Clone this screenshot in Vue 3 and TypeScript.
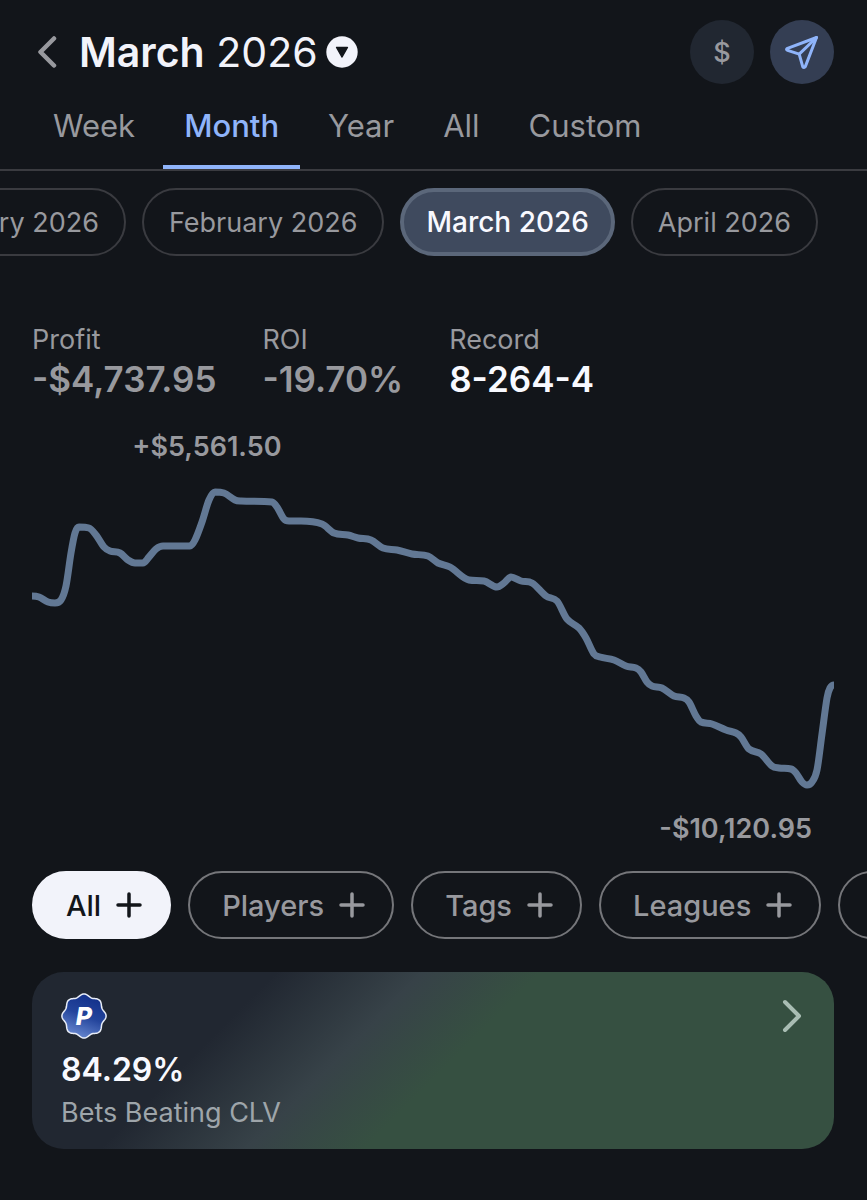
<script setup lang="ts">
import { computed, ref } from 'vue'

type Point = [number, number]

const tabs: string[] = ['Week', 'Month', 'Year', 'All', 'Custom']
const activeTab = ref('Month')

const periods: string[] = ['January 2026', 'February 2026', 'March 2026', 'April 2026']
const activePeriod = ref('March 2026')

const filters: string[] = ['All', 'Players', 'Tags', 'Leagues']
const activeFilter = ref('All')

const stats = [
  { label: 'Profit', value: '-$4,737.95', strong: false },
  { label: 'ROI', value: '-19.70%', strong: false },
  { label: 'Record', value: '8-264-4', strong: true },
]

const points: Point[] = [
  [0, 112], [7, 113], [16, 118], [23, 119], [29, 116], [34, 102], [39, 69], [43, 49], [47, 43],
  [57, 44], [64, 51], [72, 63], [78, 67], [88, 69], [96, 76], [103, 79], [111, 79], [117, 73],
  [124, 65], [131, 62], [158, 62], [163, 56], [170, 38], [177, 16], [183, 8], [192, 9], [203, 16],
  [209, 17], [240, 18], [245, 23], [252, 35], [257, 37], [269, 37], [290, 40], [302, 49], [316, 51],
  [326, 54], [339, 56], [351, 64], [365, 66], [380, 70], [396, 72], [406, 79], [418, 83],
  [437, 96], [452, 97], [465, 103], [472, 99], [479, 93], [489, 97], [500, 99], [514, 112],
  [525, 117], [535, 135], [547, 144], [554, 154], [562, 170], [568, 173], [582, 176],
  [594, 182], [604, 184], [609, 188], [615, 198], [620, 202], [630, 204], [642, 212], [652, 214],
  [657, 218], [664, 232], [669, 238], [680, 240], [694, 246], [704, 249], [709, 253], [717, 265],
  [729, 270], [740, 282], [747, 284], [759, 285], [764, 289], [770, 298], [775, 301], [780, 298],
  [785, 286], [790, 250], [795, 214], [798, 204], [802, 201],
]

// Monotone cubic interpolation keeps the plateaus flat.
const linePath = computed<string>(() => {
  const n = points.length
  const slope: number[] = []
  for (let i = 0; i < n - 1; i++) {
    slope.push((points[i + 1][1] - points[i][1]) / (points[i + 1][0] - points[i][0]))
  }
  const tangent: number[] = points.map((_, i) => {
    if (i === 0 || i === n - 1) return 0
    const a = slope[i - 1]
    const b = slope[i]
    if (a * b <= 0) return 0
    const mean = (points[i + 1][1] - points[i - 1][1]) / (points[i + 1][0] - points[i - 1][0])
    const limit = 3 * Math.min(Math.abs(a), Math.abs(b))
    return Math.sign(mean) * Math.min(Math.abs(mean), limit)
  })
  let d = `M${points[0][0]} ${points[0][1]}`
  for (let i = 0; i < n - 1; i++) {
    const [x0, y0] = points[i]
    const [x1, y1] = points[i + 1]
    const h = (x1 - x0) / 3
    d += `C${x0 + h} ${y0 + tangent[i] * h} ${x1 - h} ${y1 - tangent[i + 1] * h} ${x1} ${y1}`
  }
  return d
})

// Eight-lobed badge outline.
const badgePath = computed<string>(() => {
  const steps = 160
  let d = ''
  for (let i = 0; i < steps; i++) {
    const a = (i / steps) * Math.PI * 2
    const r = 20.8 + 1.3 * Math.cos(8 * a)
    d += `${i ? 'L' : 'M'}${(23 + r * Math.cos(a)).toFixed(2)} ${(23 + r * Math.sin(a)).toFixed(2)}`
  }
  return d + 'Z'
})
</script>

<template>
  <main class="screen">
    <header class="header">
      <button class="back" aria-label="Back">
        <svg width="20" height="34" viewBox="0 0 20 34" fill="none" stroke="currentColor" stroke-width="4.500" stroke-linecap="round" stroke-linejoin="round">
          <path d="M17 3.500L3.500 17L17 30.500" />
        </svg>
      </button>
      <button class="title">
        <span><strong>March</strong> 2026</span>
        <svg width="32" height="32" viewBox="0 0 32 32">
          <circle cx="16" cy="16" r="15.700" fill="#f2f3fa" />
          <path d="M10.600 11.500H21.400L16 21Z" fill="#12151a" stroke="#12151a" stroke-width="1.500" stroke-linejoin="round" />
        </svg>
      </button>
      <div class="actions">
        <button class="round" aria-label="Show amounts in dollars">$</button>
        <button class="round round-accent" aria-label="Share">
          <svg width="34" height="34" viewBox="0 0 34 34" fill="none" stroke="currentColor" stroke-width="3" stroke-linejoin="round" stroke-linecap="round">
            <path d="M31.500 2.500L2.500 13.400Q0.500 14.500 2.600 15.400L14.200 19.100L17.800 31.800Q19 33.300 20.300 31.600Z" />
            <path d="M14.200 19.100L31.500 2.500" />
          </svg>
        </button>
      </div>
    </header>

    <nav class="tabs" aria-label="Range">
      <button
        v-for="tab in tabs"
        :key="tab"
        class="tab"
        :class="{ active: tab === activeTab }"
        @click="activeTab = tab"
      >{{ tab }}</button>
    </nav>

    <div class="periods">
      <button
        v-for="period in periods"
        :key="period"
        class="period"
        :class="{ active: period === activePeriod }"
        @click="activePeriod = period"
      >{{ period }}</button>
    </div>

    <dl class="stats">
      <div v-for="stat in stats" :key="stat.label">
        <dt>{{ stat.label }}</dt>
        <dd :class="{ strong: stat.strong }">{{ stat.value }}</dd>
      </div>
    </dl>

    <section class="chart" aria-label="Profit over the month">
      <p class="high">+$5,561.50</p>
      <svg class="plot" viewBox="0 0 802 310" preserveAspectRatio="none">
        <path :d="linePath" fill="none" stroke="#627894" stroke-width="7" stroke-linejoin="round" vector-effect="non-scaling-stroke" />
      </svg>
      <p class="low">-$10,120.95</p>
    </section>

    <div class="filters">
      <button
        v-for="filter in filters"
        :key="filter"
        class="filter"
        :class="{ active: filter === activeFilter }"
        @click="activeFilter = filter"
      >
        {{ filter }}
        <svg width="26" height="26" viewBox="0 0 26 26" fill="none" stroke="currentColor" stroke-width="3.500" stroke-linecap="round">
          <path d="M13 2V24M2 13H24" />
        </svg>
      </button>
      <button class="filter" aria-label="More filters">
        <svg width="26" height="26" viewBox="0 0 26 26" fill="none" stroke="currentColor" stroke-width="3.500" stroke-linecap="round">
          <path d="M13 2V24M2 13H24" />
        </svg>
      </button>
    </div>

    <a class="card" href="#clv">
      <span class="card-top">
        <svg class="badge" width="46" height="46" viewBox="0 0 46 46">
          <defs>
            <linearGradient id="badge-fill" x1="0.700" y1="0.100" x2="0.350" y2="1">
              <stop offset="0" stop-color="#14328c" />
              <stop offset="0.450" stop-color="#24459c" />
              <stop offset="1" stop-color="#6a8ad2" />
            </linearGradient>
          </defs>
          <path :d="badgePath" fill="url(#badge-fill)" stroke="#e8edf8" stroke-width="1.500" />
          <text x="23" y="32" text-anchor="middle" class="badge-letter">P</text>
        </svg>
        <svg width="20" height="34" viewBox="0 0 20 34" fill="none" stroke="#a9bdb3" stroke-width="4" stroke-linecap="round" stroke-linejoin="round">
          <path d="M3 3L17 17L3 31" />
        </svg>
      </span>
      <strong class="card-value">84.29%</strong>
      <span class="card-label">Bets Beating CLV</span>
    </a>
  </main>
</template>

<style>
body {
  margin: 0;
  background: #12151a;
}
</style>

<style scoped>
.screen {
  box-sizing: border-box;
  min-height: 100vh;
  padding-top: 20px;
  overflow: hidden;
  background: #12151a;
  color: #98999e;
  font-family: Inter, "Liberation Sans", sans-serif;
  font-size: 27px;
}

button {
  padding: 0;
  border: 0;
  background: none;
  color: inherit;
  font: inherit;
  white-space: nowrap;
  cursor: pointer;
}

svg {
  display: block;
  flex: none;
}

.header {
  display: flex;
  align-items: center;
  height: 64px;
  padding: 0 33px 0 37px;
}

.title {
  display: flex;
  align-items: center;
  gap: 8px;
  margin-left: 22px;
  color: #f2f3fa;
  font-size: 41px;
}

.title strong {
  font-weight: 600;
}

.actions {
  display: flex;
  gap: 16px;
  margin-left: auto;
}

.round {
  display: grid;
  place-items: center;
  width: 64px;
  height: 64px;
  border-radius: 50%;
  background: #212731;
  font-weight: 500;
}

.round-accent {
  background: #343e53;
  color: #8fb4fa;
}

.tabs {
  display: flex;
  gap: 7px;
  padding-left: 32px;
  border-bottom: 2px solid #3a3b40;
}

.tab {
  height: 85px;
  padding: 2px 21px 0;
  border-bottom: 4px solid transparent;
  font-size: 31px;
}

.tab.active {
  border-color: #8fb4fa;
  color: #8fb4fa;
  font-weight: 500;
}

.periods {
  display: flex;
  justify-content: flex-end;
  gap: 16px;
  margin-top: 17px;
  padding-right: 49px;
}

.period {
  flex: none;
  height: 68px;
  padding: 0 25px;
  border: 2px solid #3a3b40;
  border-radius: 34px;
}

.period.active {
  padding: 0 22px;
  border: 4px solid #5b677a;
  background: #3f4a5e;
  color: #f8f9ff;
  font-size: 28px;
  font-weight: 500;
}

.stats {
  display: flex;
  gap: 46px;
  margin: 68px 32px 0;
}

.stats dt {
  line-height: 32px;
}

.stats dd {
  margin: 0;
  font-size: 35px;
  font-weight: 600;
  line-height: 46px;
}

.stats dd.strong {
  color: #f8f9ff;
}

.chart {
  margin: 28px 33px 0 32px;
  font-weight: 600;
}

.chart p {
  margin: 0;
  line-height: 34px;
}

.high {
  padding-left: 12.5%;
}

.low {
  padding-right: 22px;
  text-align: right;
}

.plot {
  width: 100%;
  height: 310px;
  margin: 20px 0 18px;
}

.filters {
  display: flex;
  gap: 17px;
  margin-top: 25px;
  padding-left: 32px;
}

.filter {
  display: flex;
  flex: none;
  align-items: center;
  gap: 15px;
  height: 68px;
  padding: 0 27px 0 32px;
  border: 2px solid #75767a;
  border-radius: 34px;
  font-size: 29px;
  font-weight: 500;
}

.filter.active {
  border-color: #f2f3fa;
  background: #f2f3fa;
  color: #12151a;
}

.card {
  display: flex;
  flex-direction: column;
  margin: 33px 33px 0 32px;
  padding: 21px 32px 17px 29px;
  border-radius: 32px;
  background: linear-gradient(135deg, #212731 25%, #374248 40%, #365041 52%);
  color: #9ea5aa;
  text-decoration: none;
}

.card-top {
  display: flex;
  align-items: center;
  justify-content: space-between;
}

.badge-letter {
  fill: #fff;
  font-size: 25px;
  font-style: italic;
  font-weight: 800;
}

.card-value {
  color: #f8f9ff;
  font-size: 32px;
  font-weight: 600;
  line-height: 48px;
  margin-top: 7px;
}

.card-label {
  line-height: 38px;
}
</style>
